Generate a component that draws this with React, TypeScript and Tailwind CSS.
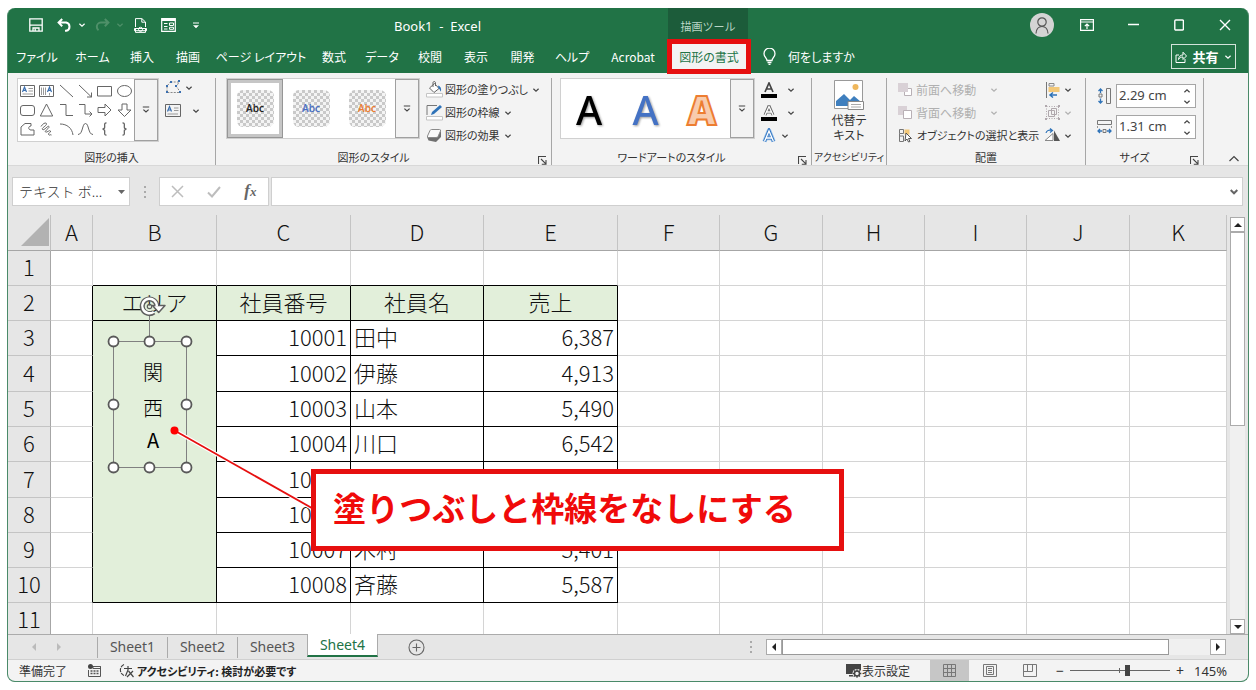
import React from 'react';
import clsx from 'clsx';

type IconProps = { className?: string };

const Chevron: React.FC<IconProps> = ({ className = 'text-[#444]' }) => (
  <svg width="8" height="8" viewBox="0 0 8 8" fill="none" stroke="currentColor" strokeWidth="1.2" className={clsx('shrink-0', className)}>
    <path d="M1.4 2.8 4 5.2l2.6-2.4" />
  </svg>
);

const MoreIcon = () => (
  <svg width="8" height="8" viewBox="0 0 8 8" fill="none" stroke="#444" strokeWidth="1.2">
    <path d="M.8 1h6.400M1.4 3.600 4 6l2.600-2.400" />
  </svg>
);

const Launcher: React.FC<{ label: string }> = ({ label }) => (
  <button aria-label={label} className="absolute right-1 bottom-0">
    <svg width="9" height="9" viewBox="0 0 9 9" fill="none" stroke="#444" strokeWidth="1.1">
      <path d="M.5 8V.5H8M3 3l4.6 4.6M8 4v4.2H3.8" />
    </svg>
  </button>
);

/* ---------- title bar ---------- */

const TitleBar = () => (
  <div className="flex h-8 shrink-0 items-center text-white">
    <div className="flex w-[386px] items-center pt-[2px] pl-[21px]">
      <button aria-label="上書き保存" className="mr-[14px]">
        <svg width="14" height="14" viewBox="0 0 14 14" fill="none" stroke="currentColor" strokeWidth="1.3">
          <path d="M.8.8h12.4v12.4H.8zM.8 7.2h12.4M4 13V10h6v3" />
          <path d="M6.2 10.5v2.5" />
        </svg>
      </button>
      <button aria-label="元に戻す" className="flex items-center gap-[6px]">
        <svg width="15" height="14" viewBox="0 0 15 14" fill="none" stroke="currentColor" strokeWidth="2">
          <path d="M5.2 1 1.6 4.6l3.6 3.6M1.8 4.6h7.4a4.2 4.2 0 0 1 0 8.2H8" />
        </svg>
        <Chevron className="text-white" />
      </button>
      <button aria-label="やり直し" disabled className="ml-[9px] flex items-center gap-[6px] text-[#4f9069]">
        <svg width="15" height="14" viewBox="0 0 15 14" fill="none" stroke="currentColor" strokeWidth="2">
          <path d="m9.8 1 3.6 3.6-3.6 3.6M13.2 4.6H5.8a4.2 4.2 0 0 0-4 4.2c0 1.500.6 2.600 1.700 3.400" />
        </svg>
        <Chevron className="text-[#4f9069]" />
      </button>
      <button aria-label="印刷プレビュー" className="ml-[10px]">
        <svg width="13" height="15" viewBox="0 0 13 15" fill="none" stroke="currentColor" strokeWidth="1">
          <path d="M1.500 9V.6h6.400L11.500 4v5M7.800.8v3.400h3.500M1.500 11v3.400h10V11" />
          <path d="M.5 10.500h12v2.200H.5z" />
          <circle cx="6.500" cy="11.300" r="2" />
        </svg>
      </button>
      <button aria-label="フォーム" className="ml-[14px]">
        <svg width="15" height="14" viewBox="0 0 15 14" fill="none" stroke="currentColor" strokeWidth="1.2">
          <path d="M.7.7h13.600v12.600H.7z" />
          <path d="M.7 2h13.600" strokeWidth="2" />
          <path d="M3 5.500h3.500M3 8.500h3.500M3 11h3.500M8.500 5h4v2.500h-4zM8.500 9.300h4v2h-4z" strokeWidth="1" />
        </svg>
      </button>
      <button aria-label="クイック アクセス ツール バーのユーザー設定" className="ml-[17px]">
        <svg width="6" height="7" viewBox="0 0 6 7" fill="currentColor">
          <path d="M0 .5h6v1H0zM0 3.200h6L3 6.200z" />
        </svg>
      </button>
    </div>
    <div className="w-[274px] pt-1 font-[Noto_Sans] text-[13px] leading-5 whitespace-pre">Book1  -  Excel</div>
    <div className="flex h-full w-[80px] items-end justify-center bg-[#1c5c3a] pb-1 text-[11px] leading-5 text-[#b9d5c5]">描画ツール</div>
    <div className="ml-auto flex items-center pt-[1px]">
      <button aria-label="アカウント" className="mr-[26px] flex size-6 items-end justify-center overflow-hidden rounded-full bg-[#d4d4d4]">
        <svg width="18" height="22" viewBox="0 0 18 22" fill="none" stroke="#555" strokeWidth="1.2">
          <circle cx="9" cy="7" r="4.200" />
          <path d="M3 18.500c.3-4.500 2.700-7 6-7s5.700 2.500 6 7" />
        </svg>
      </button>
      <button aria-label="リボンの表示オプション" className="mr-[34px]">
        <svg width="14" height="12" viewBox="0 0 14 12" fill="none" stroke="currentColor" strokeWidth="1.200">
          <path d="M.6.6h12.800v10.800H.6zM.6 3h12.800M7 10V5.200M4.800 7.200 7 5l2.200 2.200" />
        </svg>
      </button>
      <button aria-label="最小化" className="mr-[35px]">
        <svg width="11" height="12" viewBox="0 0 11 12" stroke="currentColor" strokeWidth="1.400"><path d="M0 5.500h11" /></svg>
      </button>
      <button aria-label="最大化" className="mr-[35px]">
        <svg width="10" height="12" viewBox="0 0 10 12" fill="none" stroke="currentColor" strokeWidth="1.400"><rect x=".8" y="1" width="8.600" height="10" rx="1" /></svg>
      </button>
      <button aria-label="閉じる" className="mr-[17px]">
        <svg width="12" height="12" viewBox="0 0 12 12" stroke="currentColor" strokeWidth="1.400"><path d="m1 1 10 10M11 1 1 11" /></svg>
      </button>
    </div>
  </div>
);

const tabs = [
  { label: 'ファイル', width: 'w-[58px]' },
  { label: 'ホーム', width: 'w-[53px]' },
  { label: '挿入', width: 'w-[46px]' },
  { label: '描画', width: 'w-[46px]' },
  { label: 'ページ レイアウト', width: 'w-[100px]' },
  { label: '数式', width: 'w-[46px]' },
  { label: 'データ', width: 'w-[50px]' },
  { label: '校閲', width: 'w-[46px]' },
  { label: '表示', width: 'w-[46px]' },
  { label: '開発', width: 'w-[47px]' },
  { label: 'ヘルプ', width: 'w-[52px]' },
  { label: 'Acrobat', width: 'w-[70px]' },
];

const TabRow = () => (
  <nav className="flex h-[33px] shrink-0 items-center text-[12px] whitespace-nowrap text-white [font-feature-settings:'palt']">
    {tabs.map((t) => (
      <button key={t.label} className={clsx('flex h-full items-center justify-center', t.width)}>{t.label}</button>
    ))}
    <button className="relative flex h-full w-[82px] items-center justify-center bg-[#f3f3f3] text-[#217346]">
      図形の書式
      {/* highlight frame */}
      <span className="absolute -inset-[1px] border-[5px] border-[#e60f0f]" />
    </button>
    <button className="ml-[13px] flex items-center gap-3">
      <svg width="13" height="17" viewBox="0 0 13 17" fill="none" stroke="currentColor" strokeWidth="1.300">
        <path d="M4 12.500c0-2.500-3-3.500-3-6.800a5.500 5.500 0 0 1 11 0c0 3.300-3 4.300-3 6.800zM4.500 14.500h4M5.500 16.300h2" />
      </svg>
      何をしますか
    </button>
    <button className="mr-3 ml-auto flex h-[25px] w-[65px] items-center justify-center gap-[5px] border border-white/80 text-[13px] font-bold">
      <svg width="12" height="12" viewBox="0 0 12 12" fill="none" stroke="currentColor" strokeWidth="1">
        <path d="M4 4H1v7.500h9V8M3.500 8.500c.3-3 2-4.500 4.500-4.500V1.200L11.500 5 8 8.500V6C6 6 4.500 6.800 3.500 8.500z" />
      </svg>
      共有
      <Chevron className="text-white" />
    </button>
  </nav>
);

/* ---------- ribbon ---------- */

const shapeIcons: React.ReactNode[] = [
  <g key="tb"><path d="M.5 1.500h14v11H.5z" /><path d="M8.500 4.500H13M8.500 7H13M2.500 10H13" stroke="#999" /><path d="m2.500 8 2-5 2 5M3.200 6.300h2.600" stroke="#3a6fb0" strokeWidth="1.200" /></g>,
  <g key="vtb"><path d="M.5 1.500h14v11H.5z" /><path d="M2.500 3.500v7.500M4.500 3.500v7.500M6.500 3.500v7.500M10.500 9v2.500" stroke="#999" /><path d="m8.500 8 2-5 2 5M9.200 6.300h2.600" stroke="#3a6fb0" strokeWidth="1.200" /></g>,
  <path key="l" d="m1 1 13 12" />,
  <path key="a" d="m1 1 12.500 12M13.500 8.500V13H9" />,
  <path key="r" d="M.5 2.500h14v9.500H.5z" />,
  <ellipse key="e" cx="7.500" cy="7" rx="7" ry="5.500" />,
  <rect key="rr" x=".5" y="2.500" width="14" height="10" rx="2.500" />,
  <path key="t" d="m7.500 1 6.200 12H1.300z" />,
  <path key="el" d="M1 1.500h6v11h7" />,
  <path key="ea" d="M1 1.500h6v9.500h7M11.500 8.500 14 11l-2.500 2.500" />,
  <path key="ra" d="M1 4.500h7V1l6 6-6 6V9.500H1z" />,
  <path key="da" d="M5 1h5v6h4l-6.500 6.500L1 7h4z" />,
  <path key="ff" d="M1 13V5l4-3.500h6V4c-3 0-3 4 0 4h3v5z" />,
  <path key="sc" d="M2 4.500C4 1 7.500 0 7.500 2S2 6 3.500 7.500 9 3 10 4.500 5 9 6.500 10s4-2.500 5-1-3 2-2 3.500 2-.5 3 .5" />,
  <path key="arc" d="M1 2c7 0 12 4 13 11" />,
  <path key="cv" d="M0 12.500c5 0 4-11 7.500-11S10 12.500 15 12.500" />,
  <path key="lb" d="M9.500.8C7 .8 7.700 3 7.700 5S7 7 5.500 7c1.500 0 2.200.5 2.200 2.200s-.7 4 1.800 4" strokeWidth="1.300" />,
  <path key="rb" d="M5.500.8C8 .8 7.300 3 7.300 5S8 7 9.500 7C8 7 7.300 7.500 7.300 9.200s.7 4-1.800 4" strokeWidth="1.300" />,
];

type GroupProps = { label: string; className: string; body?: string; launcher?: boolean; children: React.ReactNode };

const Group: React.FC<GroupProps> = ({ label, className, body, launcher, children }) => (
  <section className={clsx('flex shrink-0 flex-col justify-between border-r border-[#a6a6a6]', className)}>
    <div className={clsx('flex h-[69px]', body)}>{children}</div>
    <div className={clsx('relative text-center leading-4 whitespace-nowrap text-[#333]', launcher && 'pr-5')}>
      {label}
      {launcher && <Launcher label={`${label}の詳細設定`} />}
    </div>
  </section>
);

const MoreButton: React.FC<{ label: string }> = ({ label }) => (
  <button aria-label={label} className="flex w-6 items-center justify-center border border-[#a0a0a0] bg-[#f3f3f3]">
    <MoreIcon />
  </button>
);

const Thumb: React.FC<{ color: string; selected?: boolean }> = ({ color, selected }) => (
  <button className={clsx('flex w-14 items-center justify-center border-4 bg-white', selected ? 'border-[#c6c6c6] outline -outline-offset-1 outline-[#969696]' : 'border-transparent')}>
    <span className="flex size-[37px] items-center justify-center rounded-md bg-[repeating-conic-gradient(#c9c9c9_0_25%,#f4f4f4_0_50%)] bg-[length:6px_6px]">
      <span className={clsx('font-[Open_Sans] text-[10px] font-semibold', color)}>Abc</span>
    </span>
  </button>
);

const FillIcon = () => (
  <svg width="17" height="17" viewBox="0 0 17 17" fill="none">
    <path d="m3.500 7 5-4.500 4.500 5L8 11.500z" fill="#fff" stroke="#666" />
    <path d="M7 6V1.500a1.300 1.300 0 0 1 2.500 0V5" stroke="#666" />
    <path d="M12 4.500c2.500.5 3.500 3 3 6-1-.5-1-2.500-2.500-3z" fill="#2f73b8" />
    <path d="M.5 12.500h16v3.500H.5z" fill="#fff" stroke="#c4c4c4" />
  </svg>
);

const OutlineIcon = () => (
  <svg width="17" height="17" viewBox="0 0 17 17" fill="none">
    <path d="M11 1.500H1v9.500" stroke="#777" />
    <path d="m5 11 1-3 8-7 2 2-8 7z" fill="#2f73b8" />
    <path d="M.5 12.500h16v3.500H.5z" fill="#fff" stroke="#c4c4c4" />
  </svg>
);

const EffectIcon = () => (
  <svg width="17" height="17" viewBox="0 0 17 17" fill="none">
    <path d="m1 10 1.500 3.500L10 15l5-5V4z" fill="#707070" />
    <path d="M5.500 2.500h8q1.500 0 1 1.500L12 9.500q-.5 1-2 1H2.500q-1.500 0-1-1.500L4 3.500q.5-1 1.500-1z" fill="#fafafa" stroke="#8a8a8a" />
  </svg>
);

const shapeCommands = [
  { label: '図形の塗りつぶし', icon: <FillIcon /> },
  { label: '図形の枠線', icon: <OutlineIcon /> },
  { label: '図形の効果', icon: <EffectIcon /> },
];

const SizeField: React.FC<{ id: string; label: string; value: string; icon: React.ReactNode }> = ({ id, label, value, icon }) => (
  <div className="flex items-center gap-1">
    <label htmlFor={id} aria-label={label}>{icon}</label>
    <div className="flex h-6 w-20 border border-[#a6a6a6] bg-white">
      <input id={id} defaultValue={value} className="w-[62px] pl-[2px] font-[Noto_Sans] text-[13px] text-[#444] outline-none" />
      <div className="flex flex-1 flex-col items-center justify-center gap-[3px]">
        <button aria-label={`${label}を増やす`}><Chevron className="rotate-180 text-[#444]" /></button>
        <button aria-label={`${label}を減らす`}><Chevron /></button>
      </div>
    </div>
  </div>
);

const Ribbon = () => (
  <div className="flex h-[93px] shrink-0 border-b border-[#d8d8d8] bg-[#f3f3f3] pt-[5px] text-[11px] text-[#333] [font-feature-settings:'palt']">
    <Group label="図形の挿入" className="w-[208px]" body="pl-[9px]">
      <div className="flex h-[64px] w-[142px] border border-[#d0d0d0] bg-white">
        <div className="grid flex-1 grid-cols-6 items-center justify-items-center py-[2px]">
          {shapeIcons.map((icon, i) => (
            <button key={i} aria-label={`図形 ${i + 1}`}>
              <svg width="15" height="14" viewBox="0 0 15 14" fill="none" stroke="#666" strokeWidth="1">{icon}</svg>
            </button>
          ))}
        </div>
        <MoreButton label="図形の一覧" />
      </div>
      <div className="flex flex-col gap-2 pt-[2px] pl-[6px]">
        <button aria-label="図形の編集" className="flex items-center gap-[3px]">
          <svg width="17" height="15" viewBox="0 0 17 15" fill="none" stroke="#888">
            <path d="M5.500 2h8.500l-2.500 4.500 4 6H2V6z" strokeDasharray="2 1.200" />
            <g fill="#3a6fb0" stroke="none">
              <path d="M5 1h2v2H5zM13 0h2v2h-2zM10 5h2v2h-2zM14 11h2v2h-2zM1 11h2v2H1zM1 5h2v2H1z" />
            </g>
          </svg>
          <Chevron />
        </button>
        <button aria-label="テキスト ボックス" className="flex items-center gap-[10px]">
          <svg width="17" height="15" viewBox="0 0 17 15" fill="none" stroke="#666">
            <path d="M.5 1.500h15v12H.5z" />
            <path d="M9 5h4.500M9 7.500h4.500M2.500 11H13" stroke="#999" />
            <path d="m2.500 8.500 2-5 2 5M3.200 7h2.600" stroke="#3a6fb0" strokeWidth="1.200" />
          </svg>
          <Chevron />
        </button>
      </div>
    </Group>

    <Group label="図形のスタイル" className="w-[336px]" body="pl-[10px]" launcher>
      <div className="flex h-[61px] border border-[#d0d0d0] bg-white">
        <Thumb color="text-[#222]" selected />
        <Thumb color="text-[#4a6fc4]" />
        <Thumb color="text-[#ed7d31]" />
        <MoreButton label="スタイルの一覧" />
      </div>
      <div className="flex flex-col pl-[6px]">
        {shapeCommands.map((c) => (
          <button key={c.label} className="flex h-[23px] items-center gap-[2px] whitespace-nowrap">
            {c.icon}
            {c.label}
            <Chevron className="ml-[2px] text-[#444]" />
          </button>
        ))}
      </div>
    </Group>

    <Group label="ワードアートのスタイル" className="w-[260px]" body="pl-2" launcher>
      <div className="flex h-[61px] w-[195px] border border-[#d0d0d0] bg-white font-[Noto_Sans] text-[40px] leading-[62px] font-medium">
        <button className="flex-1 text-black drop-shadow-[1px_1px_1px_#999]">A</button>
        <button className="flex-1 text-[#4472c4] drop-shadow-[1px_1px_1px_#999]">A</button>
        <button className="flex-1 font-black text-[#f8cbad] [-webkit-text-stroke:2px_#ed7d31]">A</button>
        <MoreButton label="ワードアートの一覧" />
      </div>
      <div className="flex flex-col pl-[6px]">
        <button aria-label="文字の塗りつぶし" className="flex h-[23px] items-center gap-[10px]">
          <svg width="16" height="16" viewBox="0 0 16 16" fill="none">
            <path d="M4 10 8 1l4 9M5.500 7h5" stroke="#444" strokeWidth="1.700" />
            <path d="M0 12h16v4H0z" fill="#000" />
          </svg>
          <Chevron />
        </button>
        <button aria-label="文字の輪郭" className="flex h-[23px] items-center gap-[10px]">
          <svg width="16" height="16" viewBox="0 0 16 16" fill="none">
            <path d="M4 10 8 1l4 9M5.500 7h5" stroke="#666" strokeWidth="3" />
            <path d="M4 10 8 1.500l4 8.500M5.500 7h5" stroke="#fff" strokeWidth="1.300" />
            <path d="M0 12h16v4H0z" fill="#000" />
          </svg>
          <Chevron />
        </button>
        <button aria-label="文字の効果" className="flex h-[23px] items-center gap-1">
          <svg width="16" height="16" viewBox="0 0 16 16" fill="none">
            <path d="M3.500 13.500 8 2.500l4.500 11M5 10h6" stroke="#9cc3ea" strokeWidth="4.500" strokeLinejoin="round" />
            <path d="M3.500 13.500 8 2.500l4.500 11M5 10h6" stroke="#3577c2" strokeWidth="3" />
            <path d="M3.500 13.500 8 3l4.500 10.500M5 10h6" stroke="#fff" strokeWidth="1.300" />
          </svg>
          <Chevron />
        </button>
      </div>
    </Group>

    <Group label="アクセシビリティ" className="w-[75px] text-[10px]">
      <button className="flex flex-1 flex-col items-center pt-[2px] text-[12px] leading-[15px]">
        <svg width="30" height="32" viewBox="0 0 30 32" fill="none" className="shrink-0">
          <path d="M.5.500h28v28H.5z" fill="#fff" stroke="#999" />
          <circle cx="21.500" cy="7" r="3" fill="#efb75c" />
          <path d="M2 26v-5l8-7 6 6 4-4 7 6v4z" fill="#3f7fbe" />
          <path d="M14 21.500h15.500v8H14z" fill="#fff" stroke="#888" />
          <path d="M17 24.500h10M17 27h10" stroke="#aaa" />
        </svg>
        <span>代替テ<br />キスト</span>
      </button>
    </Group>

    <Group label="配置" className="w-[199px]" body="pl-[11px]">
      <div className="flex w-[147px] flex-col">
        <button disabled className="flex h-[23px] items-center gap-1 text-[12px] text-[#b0b0b0]">
          <svg width="14" height="15" viewBox="0 0 14 15" fill="none"><path d="M6.500 6.500h7v7h-7z" fill="#fff" stroke="#b8b0b5" /><path d="M0 1h10v9H0z" fill="#d9d1d6" /></svg>
          前面へ移動
          <Chevron className="mr-[47px] ml-auto text-[#b0b0b0]" />
        </button>
        <button disabled className="flex h-[23px] items-center gap-1 text-[12px] text-[#b0b0b0]">
          <svg width="14" height="15" viewBox="0 0 14 15" fill="none"><path d="M0 1h9v9H0z" fill="#d9d1d6" /><path d="M5.500 5.500h8v8h-8z" fill="#fff" stroke="#b8b0b5" /></svg>
          背面へ移動
          <Chevron className="mr-[47px] ml-auto text-[#b0b0b0]" />
        </button>
        <button className="flex h-[23px] items-center gap-1 whitespace-nowrap">
          <svg width="15" height="15" viewBox="0 0 15 15" fill="none" className="shrink-0">
            <path d="M1.500 1.500h4v4h-4zM1.500 8h4v5.500h-4zM1.500 5.500V8" stroke="#777" />
            <path d="M6.500 1.500h5v5h-5z" fill="#f3c878" />
            <path d="m8 5 5.500 5.500h-3l1.500 3-1.500.5L9 11l-2 2z" fill="#fff" stroke="#555" />
          </svg>
          オブジェクトの選択と表示
        </button>
      </div>
      <div className="flex flex-col">
        <button aria-label="配置" className="flex h-[23px] items-center gap-[4px]">
          <svg width="15" height="16" viewBox="0 0 15 16" fill="none">
            <path d="M1.500 0v16" stroke="#777" />
            <path d="M4 1.500h5V4H4z" stroke="#888" />
            <path d="M3.500 5h11v5h-11z" fill="#f3c878" />
            <path d="M12 13H5M8 10.500 5 13l3 2.500" stroke="#2f73b8" strokeWidth="1.500" />
          </svg>
          <Chevron />
        </button>
        <button aria-label="グループ化" disabled className="flex h-[23px] items-center gap-[4px]">
          <svg width="15" height="15" viewBox="0 0 15 15" fill="none" stroke="#b0a8ad">
            <path d="M1.500 1.500h12v12h-12z" strokeDasharray="1 1.500" />
            <path d="M3.500 5.500h6v6h-6zM6.500 3.500h5v6h-5z" />
            <path d="M0 0h2v2H0zM13 0h2v2h-2zM0 13h2v2H0zM13 13h2v2h-2z" fill="#b0a8ad" stroke="none" />
          </svg>
          <Chevron className="text-[#b0b0b0]" />
        </button>
        <button aria-label="回転" className="flex h-[23px] items-center gap-[4px]">
          <svg width="15" height="15" viewBox="0 0 15 15" fill="none">
            <path d="m0 12.500 8-7v7z" fill="#fff" stroke="#888" />
            <path d="M9 2.500V13h6z" fill="#555" />
            <path d="M1 5c.5-2.500 3-3.500 6-2.500M5 .5l2.500 2L5 4.500" stroke="#2f73b8" strokeWidth="1.200" />
          </svg>
          <Chevron />
        </button>
      </div>
    </Group>

    <Group label="サイズ" className="w-[118px]" body="pl-[11px]" launcher>
      <div className="flex flex-col gap-[7px] pt-[6px]">
        <SizeField
          id="shape-height"
          label="図形の高さ"
          value="2.29 cm"
          icon={
            <svg width="15" height="16" viewBox="0 0 15 16" fill="none">
              <path d="M9.500.5h4v15h-4zM2 6h3v3H2z" stroke="#777" />
              <path d="M3.500 5V1M1.500 3l2-2 2 2M3.500 10.500v4M1.500 13l2 2 2-2" stroke="#2f73b8" strokeWidth="1.300" />
            </svg>
          }
        />
        <SizeField
          id="shape-width"
          label="図形の幅"
          value="1.31 cm"
          icon={
            <svg width="15" height="16" viewBox="0 0 15 16" fill="none">
              <path d="M.5 1.500h14v4H.5zM6 10.500h3v3H6z" stroke="#777" />
              <path d="M5 12H1M3 10l-2 2 2 2M10 12h4M12 10l2 2-2 2" stroke="#2f73b8" strokeWidth="1.300" />
              <path d="M.5 7v2M14.500 7v2" stroke="#999" />
            </svg>
          }
        />
      </div>
    </Group>

    <button aria-label="リボンを折りたたむ" className="mr-2 mb-[2px] ml-auto self-end">
      <svg width="12" height="8" viewBox="0 0 12 8" fill="none" stroke="#444" strokeWidth="1.200"><path d="M1.500 6 6 1.500 10.500 6" /></svg>
    </button>
  </div>
);

/* ---------- formula bar ---------- */

const FormulaBar = () => (
  <div className="flex h-[49px] shrink-0 items-start bg-[#e6e6e6] pt-[11px] pr-[5px] pl-1">
    <div className="flex h-[29px] w-[118px] items-center border border-[#cfcfcf] bg-white pr-1">
      <input aria-label="名前ボックス" defaultValue="テキスト ボ..." className="w-full min-w-0 pl-[6px] text-[14px] font-light text-[#333] outline-none" />
      <button aria-label="名前の一覧">
        <svg width="7" height="4" viewBox="0 0 7 4" fill="#666"><path d="M0 0h7L3.500 4z" /></svg>
      </button>
    </div>
    <div className="flex h-[29px] w-[29px] flex-col items-center justify-center gap-[3px]">
      <span className="size-[2px] bg-[#aaa]" />
      <span className="size-[2px] bg-[#aaa]" />
      <span className="size-[2px] bg-[#aaa]" />
    </div>
    <div className="flex h-[29px] w-[110px] items-center justify-around border border-[#cfcfcf] bg-white">
      <button aria-label="キャンセル">
        <svg width="13" height="13" viewBox="0 0 13 13" stroke="#bdbdbd" strokeWidth="1.500"><path d="m1 1 11 11M12 1 1 12" /></svg>
      </button>
      <button aria-label="入力">
        <svg width="14" height="12" viewBox="0 0 14 12" fill="none" stroke="#bdbdbd" strokeWidth="2"><path d="m1 6.500 4 4L13 1" /></svg>
      </button>
      <button aria-label="関数の挿入" className="font-[Liberation_Serif] text-[17px] leading-5 font-bold text-[#666] italic">
        f<span className="text-[13px]">x</span>
      </button>
    </div>
    <div className="ml-[2px] flex h-[29px] flex-1 items-center border border-[#cfcfcf] bg-white pr-1">
      <input aria-label="数式バー" className="flex-1 outline-none" />
      <button aria-label="数式バーの展開">
        <svg width="8" height="6" viewBox="0 0 8 6" fill="none" stroke="#666" strokeWidth="2"><path d="m.7 1 3.300 3.300L7.300 1" /></svg>
      </button>
    </div>
  </div>
);

/* ---------- worksheet ---------- */

const columns = [
  { name: 'A', width: 'w-[42px]' },
  { name: 'B', width: 'w-[124px]' },
  { name: 'C', width: 'w-[134px]' },
  { name: 'D', width: 'w-[133px]' },
  { name: 'E', width: 'w-[134px]' },
  { name: 'F', width: 'w-[102px]' },
  { name: 'G', width: 'w-[103px]' },
  { name: 'H', width: 'w-[102px]' },
  { name: 'I', width: 'w-[102px]' },
  { name: 'J', width: 'w-[103px]' },
  { name: 'K', width: 'w-auto' },
];

const rows = [
  { n: 1 },
  { n: 2, cells: ['社員番号', '社員名', '売上'] },
  { n: 3, cells: ['10001', '田中', '6,387'] },
  { n: 4, cells: ['10002', '伊藤', '4,913'] },
  { n: 5, cells: ['10003', '山本', '5,490'] },
  { n: 6, cells: ['10004', '川口', '6,542'] },
  { n: 7, cells: ['10005', '', ''] },
  { n: 8, cells: ['10006', '', ''] },
  { n: 9, cells: ['10007', '木村', '5,401'] },
  { n: 10, cells: ['10008', '斉藤', '5,587'] },
  { n: 11 },
];

const gridLine = 'border-r border-b border-r-[#d4d4d4] border-b-[#d4d4d4]';
const tableLine = 'border-r border-b border-r-black border-b-black';
const align = ['text-right pr-[3px]', 'text-left pl-[3px]', 'text-right pr-[3px]'];

const Sheet = () => (
  <table className="w-full table-fixed border-separate border-spacing-0 text-[22px] leading-7 font-light text-[#111]">
    <colgroup>
      <col className="w-[43px]" />
      {columns.map((c) => <col key={c.name} className={c.width} />)}
    </colgroup>
    <thead>
      <tr className="h-9 bg-[#e6e6e6]">
        <th className="border-r border-b border-r-[#c0c0c0] border-b-[#a6a6a6] p-0">
          <svg width="29" height="29" viewBox="0 0 29 29" fill="#b2b2b2" className="ml-auto"><path d="M28 0v28H0z" /></svg>
        </th>
        {columns.map((c) => (
          <th key={c.name} scope="col" className="border-r border-b border-r-[#c4c4c4] border-b-[#a6a6a6] p-0 pb-1 font-light">{c.name}</th>
        ))}
      </tr>
    </thead>
    <tbody>
      {rows.map(({ n, cells }) => (
        <tr key={n} className={n === 4 || n === 7 ? 'h-9' : 'h-[35px]'}>
          <th scope="row" className="border-r border-b border-r-[#a6a6a6] border-b-[#c4c4c4] bg-[#e6e6e6] p-0 pb-1 font-light">{n}</th>
          <td className={clsx('border-r border-b border-b-[#d4d4d4] p-0', cells ? 'border-r-black' : 'border-r-[#d4d4d4]')} />
          {n === 2 && <td className={clsx('bg-[#e2efda] p-0 pb-1 text-center', tableLine)}>エリア</td>}
          {n === 3 && <td rowSpan={8} className={clsx('bg-[#e2efda] p-0', tableLine)} />}
          {cells?.map((text, i) => (
            <td key={i} className={clsx('p-0 pb-1', tableLine, n === 2 ? 'bg-[#e2efda] text-center' : align[i])}>{text}</td>
          ))}
          {!cells && [0, 1, 2, 3].map((i) => (
            <td key={i} className={clsx('border-r border-b border-r-[#d4d4d4] p-0', n === 1 ? 'border-b-black' : 'border-b-[#d4d4d4]')} />
          ))}
          {['F', 'G', 'H', 'I', 'J', 'K'].map((c) => <td key={c} className={clsx('p-0', gridLine)} />)}
        </tr>
      ))}
    </tbody>
  </table>
);

const handles = [[6, 41], [42, 41], [79, 41], [6, 104], [79, 104], [6, 167], [42, 167], [79, 167]];

/* selected text box floating over the cells */
const TextBoxShape = () => (
  <div className="absolute top-[85px] left-[99px] h-[174px] w-[86px]">
    <svg width="86" height="174" viewBox="0 0 86 174" fill="none" className="absolute inset-0 overflow-visible">
      <path d="M42.500 14v27M6.500 41.500h73v126h-73z" stroke="#808080" />
      <path d="M49.800 6a7.300 7.300 0 1 0-3 6.200" stroke="#5f5f5f" strokeWidth="5" />
      <path d="M45.500 5.500h12.500l-6.300 7z" fill="#fff" stroke="#5f5f5f" strokeWidth="1.500" strokeLinejoin="round" />
      <path d="M49.800 6.500a7.300 7.300 0 1 0-3 5.400" stroke="#fff" strokeWidth="2.400" />
      <circle cx="42.500" cy="6.500" r="2.200" stroke="#5f5f5f" strokeWidth="1.200" />
      {handles.map(([x, y]) => (
        <circle key={`${x}-${y}`} cx={x + 0.5} cy={y + 0.5} r="5" fill="#fff" stroke="#595959" strokeWidth="1.800" />
      ))}
    </svg>
    <div className="absolute top-[54px] left-[36px] flex w-5 flex-col items-center text-[20px] leading-9 font-light text-black">
      <span>関</span>
      <span>西</span>
      <span className="leading-7 font-normal">A</span>
    </div>
  </div>
);

const Callout = () => (
  <>
    <svg width="146" height="86" viewBox="0 0 146 86" fill="none" className="absolute top-[211px] left-[162px]">
      <path d="m4.500 4.500 140 79" stroke="#fff" strokeWidth="4" />
      <path d="m4.500 4.500 140 79" stroke="#e60f0f" strokeWidth="1.800" />
      <circle cx="4.500" cy="4.500" r="4" fill="#f00" />
    </svg>
    <div className="absolute top-[254px] left-[303px] flex h-[82px] w-[533px] items-center border-[5px] border-[#e60f0f] bg-white pb-[6px] pl-[17px] text-[33px] leading-10 font-bold whitespace-nowrap text-[#f00a0a]">
      塗りつぶしと枠線をなしにする
    </div>
  </>
);

const Triangle: React.FC<{ d: string; fill?: string }> = ({ d, fill = '#222' }) => (
  <svg width="8" height="8" viewBox="0 0 8 8" fill={fill}><path d={d} /></svg>
);
const UP = 'M0 6h8L4 2z';
const DOWN = 'M0 2h8L4 6z';
const LEFT = 'M6 0v8L2 4z';
const RIGHT = 'M2 0v8l4-4z';

const SheetArea = () => (
  <div className="flex min-h-0 flex-1 bg-[#e6e6e6]">
    <div className="relative min-w-0 flex-1 overflow-hidden bg-white">
      <Sheet />
      <TextBoxShape />
      <Callout />
    </div>
    <div className="flex w-[21px] flex-col px-[3px] pt-[2px]">
      <button aria-label="上へスクロール" className="flex h-[15px] shrink-0 items-center justify-center border border-[#ababab] bg-white"><Triangle d={UP} /></button>
      <div className="h-[194px] shrink-0 border border-[#ababab] bg-white" />
      <div className="flex-1 bg-[#f0f0f0]" />
      <button aria-label="下へスクロール" className="flex h-[15px] shrink-0 items-center justify-center border border-[#ababab] bg-white"><Triangle d={DOWN} /></button>
    </div>
  </div>
);

const SheetTabs = () => (
  <div className="flex h-[26px] shrink-0 items-start border-b border-[#d0d0d0] bg-[#e6e6e6]">
    <div className="flex h-[25px] flex-1 items-center border-t border-[#ababab]">
      <div className="flex w-[89px] items-center gap-[17px] pl-[22px]">
        <button aria-label="前のシート"><Triangle d={LEFT} fill="#bbb" /></button>
        <button aria-label="次のシート"><Triangle d={RIGHT} fill="#bbb" /></button>
      </div>
      {['Sheet1', 'Sheet2', 'Sheet3'].map((s) => (
        <button key={s} className="h-[21px] w-[70px] border-l border-[#ababab] font-[Noto_Sans] text-[14px] leading-5 text-[#555]">{s}</button>
      ))}
      <button className="-mt-[3px] h-[23px] w-[71px] border-x border-b-2 border-x-[#ababab] border-b-[#217346] bg-white font-[Noto_Sans] text-[14px] leading-5 text-[#217346]">Sheet4</button>
      <button aria-label="新しいシート" className="ml-[30px]">
        <svg width="17" height="17" viewBox="0 0 17 17" fill="none" stroke="#666" strokeWidth="1.100">
          <circle cx="8.500" cy="8.500" r="7.500" />
          <path d="M8.500 4.500v8M4.500 8.500h8" />
        </svg>
      </button>
    </div>
    <div className="flex h-[25px] w-[498px] items-center border-t border-[#ababab]">
      <div className="mr-[14px] flex flex-col gap-[3px]">
        <span className="size-[2px] bg-[#aaa]" />
        <span className="size-[2px] bg-[#aaa]" />
        <span className="size-[2px] bg-[#aaa]" />
      </div>
      <button aria-label="左へスクロール" className="flex size-4 shrink-0 items-center justify-center border border-[#ababab] bg-white"><Triangle d={LEFT} /></button>
      <div className="h-4 w-[387px] border border-[#999] bg-white" />
      <div className="h-4 flex-1 bg-[#f0f0f0]" />
      <button aria-label="右へスクロール" className="mr-[22px] flex size-4 shrink-0 items-center justify-center border border-[#ababab] bg-white"><Triangle d={RIGHT} /></button>
    </div>
  </div>
);

const StatusBar = () => (
  <footer className="flex h-[21px] shrink-0 items-center bg-[#f3f3f3] pr-[18px] pl-[11px] text-[12px] leading-4 whitespace-nowrap text-[#333]">
    <span className="w-[69px]">準備完了</span>
    <svg width="13" height="13" viewBox="0 0 13 13" fill="none" stroke="#555">
      <path d="M3 2.500h9.500v10h-12V6M5 2.500h7.500v2H5z" />
      <circle cx="2.500" cy="2.500" r="2.500" fill="#444" stroke="none" />
      <path d="M2.500 7h8M2.500 9.500h8" strokeDasharray="2 1" strokeWidth="1.300" />
    </svg>
    <button className="ml-[18px] flex items-center gap-[2px] text-[11px] font-bold text-[#222] [font-feature-settings:'palt']">
      <svg width="16" height="15" viewBox="0 0 16 15" fill="none" stroke="#444" strokeWidth="1.200">
        <path d="M5 1.500a6 6 0 0 0 0 11" strokeDasharray="4 1" />
        <path d="M5 5.500h8M9 3v4l-2.500 6M9.500 8l5 6M14 8l-6 6" />
      </svg>
      アクセシビリティ: 検討が必要です
    </button>
    <button className="mr-[20px] ml-auto flex items-center">
      <svg width="16" height="15" viewBox="0 0 16 15" fill="none">
        <path d="M0 1h15v7H8v3H0zM3 12h5v1.500H3z" fill="#444" />
        <circle cx="11" cy="10.500" r="4.500" fill="#f3f3f3" />
        <circle cx="11" cy="10.500" r="2.500" stroke="#444" strokeWidth="1.500" />
        <path d="M11 6.200v2M11 12.800v2M6.700 10.500h2M13.300 10.500h2M8 7.500l1.300 1.300M12.700 12.200l1.300 1.300M14 7.500l-1.300 1.300M9.300 12.200 8 13.500" stroke="#444" strokeWidth="1.300" />
      </svg>
      表示設定
    </button>
    <button aria-label="標準" className="flex h-full w-[39px] items-center justify-center bg-[#c6c6c6]">
      <svg width="13" height="13" viewBox="0 0 13 13" fill="none" stroke="#777"><path d="M.5.500h12v12H.5zM.5 4.500h12M.5 8.500h12M4.500.5v12M8.500.5v12" /></svg>
    </button>
    <button aria-label="ページ レイアウト" className="flex h-full w-[41px] items-center justify-center">
      <svg width="14" height="13" viewBox="0 0 14 13" fill="none" stroke="#777"><path d="M.5.500h13v12H.5zM3.500 2.500h7v8h-7zM5 4.500h4M5 6.500h4M5 8.500h4" /></svg>
    </button>
    <button aria-label="改ページ プレビュー" className="flex h-full w-[39px] items-center justify-center">
      <svg width="14" height="13" viewBox="0 0 14 13" fill="none" stroke="#777"><path d="M.5.500h13v12H.5zM4.500.5v7M9.500.5v7h-9" /></svg>
    </button>
    <button aria-label="縮小" className="mr-1 ml-[5px] h-4 w-3 font-[Noto_Sans] text-[14px] leading-4">−</button>
    <div className="relative flex w-[100px] items-center">
      <span className="absolute left-[49px] h-[5px] w-px bg-[#666]" />
      <input
        type="range"
        aria-label="ズーム"
        min={10}
        max={400}
        defaultValue={235}
        className="h-px w-full appearance-none bg-[#666] [&::-webkit-slider-thumb]:relative [&::-webkit-slider-thumb]:h-[11px] [&::-webkit-slider-thumb]:w-[5px] [&::-webkit-slider-thumb]:appearance-none [&::-webkit-slider-thumb]:bg-[#444]"
      />
    </div>
    <button aria-label="拡大" className="mr-2 ml-1 h-4 w-3 font-[Noto_Sans] text-[14px] leading-4">+</button>
    <span className="w-9 font-[Noto_Sans] text-[13px]">145%</span>
  </footer>
);

export default function App() {
  return (
    <div className="h-screen overflow-hidden bg-white px-[7px] py-2 font-['Noto_Sans_CJK_JP',sans-serif]">
      <div className="flex h-full flex-col overflow-hidden rounded-lg border-x border-b border-[#4a8a69] bg-[#217346]">
        <TitleBar />
        <TabRow />
        <Ribbon />
        <FormulaBar />
        <SheetArea />
        <SheetTabs />
        <StatusBar />
      </div>
    </div>
  );
}
